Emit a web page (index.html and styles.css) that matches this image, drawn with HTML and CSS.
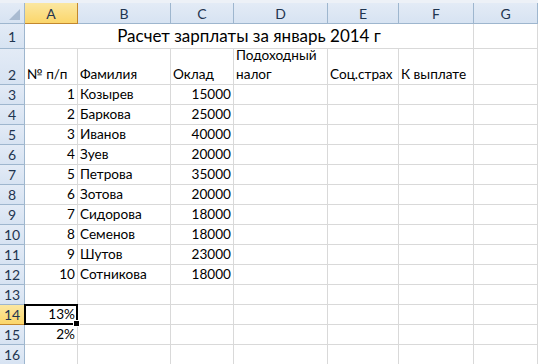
FILE: index.html
```html
<!DOCTYPE html>
<html lang="ru">
<head>
    <meta charset="UTF-8">
    <meta name="viewport" content="width=device-width, initial-scale=1.0">
    <title>Расчет зарплаты</title>
    <link rel="stylesheet" href="styles.css">
</head>
<body>
    <div class="top-strip"></div>
    <div class="sheet">
        <!-- заголовки столбцов -->
        <div class="row">
            <div class="corner"><span class="corner-tri"></span></div>
            <div class="col-head selected">A</div>
            <div class="col-head">B</div>
            <div class="col-head">C</div>
            <div class="col-head">D</div>
            <div class="col-head">E</div>
            <div class="col-head">F</div>
            <div class="col-head">G</div>
        </div>

        <div class="row">
            <div class="row-head">1</div>
            <div class="cell title">Расчет зарплаты за январь 2014 г</div>
            <div class="cell"></div>
        </div>

        <div class="row">
            <div class="row-head bottom">2</div>
            <div class="cell">№ п/п</div>
            <div class="cell">Фамилия</div>
            <div class="cell">Оклад</div>
            <div class="cell wrap">Подоходный налог</div>
            <div class="cell">Соц.страх</div>
            <div class="cell">К выплате</div>
            <div class="cell"></div>
        </div>

        <div class="row"><div class="row-head">3</div><div class="cell num">1</div><div class="cell">Козырев</div><div class="cell num">15000</div><div class="cell"></div><div class="cell"></div><div class="cell"></div><div class="cell"></div></div>
        <div class="row"><div class="row-head">4</div><div class="cell num">2</div><div class="cell">Баркова</div><div class="cell num">25000</div><div class="cell"></div><div class="cell"></div><div class="cell"></div><div class="cell"></div></div>
        <div class="row"><div class="row-head">5</div><div class="cell num">3</div><div class="cell">Иванов</div><div class="cell num">40000</div><div class="cell"></div><div class="cell"></div><div class="cell"></div><div class="cell"></div></div>
        <div class="row"><div class="row-head">6</div><div class="cell num">4</div><div class="cell">Зуев</div><div class="cell num">20000</div><div class="cell"></div><div class="cell"></div><div class="cell"></div><div class="cell"></div></div>
        <div class="row"><div class="row-head">7</div><div class="cell num">5</div><div class="cell">Петрова</div><div class="cell num">35000</div><div class="cell"></div><div class="cell"></div><div class="cell"></div><div class="cell"></div></div>
        <div class="row"><div class="row-head">8</div><div class="cell num">6</div><div class="cell">Зотова</div><div class="cell num">20000</div><div class="cell"></div><div class="cell"></div><div class="cell"></div><div class="cell"></div></div>
        <div class="row"><div class="row-head">9</div><div class="cell num">7</div><div class="cell">Сидорова</div><div class="cell num">18000</div><div class="cell"></div><div class="cell"></div><div class="cell"></div><div class="cell"></div></div>
        <div class="row"><div class="row-head">10</div><div class="cell num">8</div><div class="cell">Семенов</div><div class="cell num">18000</div><div class="cell"></div><div class="cell"></div><div class="cell"></div><div class="cell"></div></div>
        <div class="row"><div class="row-head">11</div><div class="cell num">9</div><div class="cell">Шутов</div><div class="cell num">23000</div><div class="cell"></div><div class="cell"></div><div class="cell"></div><div class="cell"></div></div>
        <div class="row"><div class="row-head">12</div><div class="cell num">10</div><div class="cell">Сотникова</div><div class="cell num">18000</div><div class="cell"></div><div class="cell"></div><div class="cell"></div><div class="cell"></div></div>
        <div class="row"><div class="row-head">13</div><div class="cell"></div><div class="cell"></div><div class="cell"></div><div class="cell"></div><div class="cell"></div><div class="cell"></div><div class="cell"></div></div>
        <div class="row"><div class="row-head selected">14</div><div class="cell num active">13%<span class="handle"></span></div><div class="cell"></div><div class="cell"></div><div class="cell"></div><div class="cell"></div><div class="cell"></div><div class="cell"></div></div>
        <div class="row"><div class="row-head">15</div><div class="cell num">2%</div><div class="cell"></div><div class="cell"></div><div class="cell"></div><div class="cell"></div><div class="cell"></div><div class="cell"></div></div>
        <div class="row"><div class="row-head">16</div><div class="cell"></div><div class="cell"></div><div class="cell"></div><div class="cell"></div><div class="cell"></div><div class="cell"></div><div class="cell"></div></div>
    </div>
</body>
</html>
```

FILE: styles.css
```css
body {
    margin: 0;
    padding: 0;
    width: 538px;
    height: 364px;
    overflow: hidden;
    background: #ffffff;
    font-family: Lato, "Open Sans", sans-serif;
    font-size: 13.6px;
    color: #000000;
}

.top-strip {
    height: 3px;
    background: #edf1f7;
}

.sheet {
    display: grid;
    grid-template-columns: 25px 53px 93px 63px 94px 71px 75px 64px;
    grid-template-rows: 21px 25px 36px;
    grid-auto-rows: 20px;
}

.row {
    display: contents;
}

/* заголовки */
.corner,
.col-head,
.row-head {
    box-sizing: border-box;
    background: linear-gradient(#e3ebf6, #d7e3f2);
    border-right: 1px solid #9eb6ce;
    border-bottom: 1px solid #9eb6ce;
    color: #1f3550;
    font-size: 14px;
    display: flex;
    justify-content: center;
    align-items: center;
}

.row-head.bottom {
    align-items: flex-end;
    padding-bottom: 1px;
}

.corner {
    position: relative;
}

.corner-tri {
    position: absolute;
    right: 4px;
    bottom: 3px;
    width: 0;
    height: 0;
    border-left: 11px solid transparent;
    border-bottom: 11px solid #a9bbd1;
}

.col-head.selected,
.row-head.selected {
    background: linear-gradient(#fbe7a1, #fbd66b);
    border-right-color: #c2872e;
    border-bottom-color: #c2872e;
}

/* ячейки */
.cell {
    box-sizing: border-box;
    border-right: 1px solid #d9d9d9;
    border-bottom: 1px solid #d9d9d9;
    display: flex;
    align-items: flex-end;
    padding: 0 2px 1px 2px;
    white-space: nowrap;
    line-height: 18px;
}

.cell.num {
    justify-content: flex-end;
}

.cell.title {
    grid-column: span 6;
    justify-content: center;
    align-items: center;
    font-size: 17px;
    padding-bottom: 0;
}

.cell.wrap {
    white-space: normal;
    line-height: 19px;
    padding-bottom: 0;
}

.cell.active {
    position: relative;
    border: 2px solid #000000;
    margin: -1px 0 0 -1px;
    padding-right: 1px;
    padding-bottom: 0;
}

.handle {
    position: absolute;
    right: -4px;
    bottom: -4px;
    width: 5px;
    height: 5px;
    background: #000000;
    border: 1px solid #ffffff;
}
```
